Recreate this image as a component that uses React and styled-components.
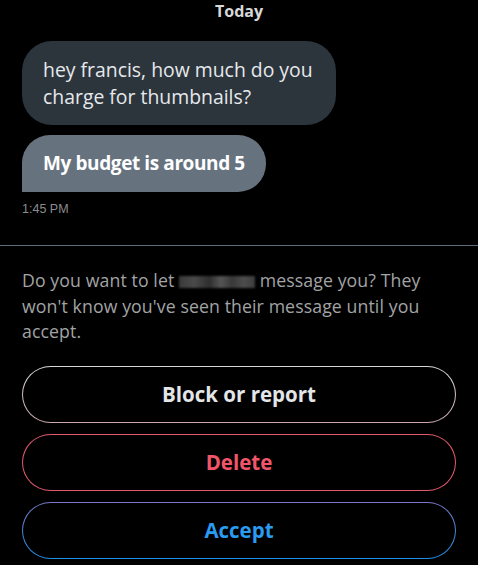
import React from 'react';
import styled, { createGlobalStyle } from 'styled-components';

const GlobalStyle = createGlobalStyle`
    html, body {
        margin: 0;
        padding: 0;
        background: #000;
    }

    body {
        font-family: "Open Sans", "Noto Sans", sans-serif;
        -webkit-font-smoothing: antialiased;
    }
`;

function App() {
    return (
        <>
            <GlobalStyle />
            <Screen>
                <Thread>
                    <DayLabel>Today</DayLabel>
                    <Bubble>hey francis, how much do you charge for thumbnails?</Bubble>
                    <Bubble last>My budget is around 5</Bubble>
                    <Time>1:45 PM</Time>
                </Thread>
                <Divider />
                <Request>
                    <Prompt>
                        Do you want to let <Blurred /> message you? They won't know you've seen their message until you accept.
                    </Prompt>
                    <Actions>
                        <ActionButton tone="neutral">Block or report</ActionButton>
                        <ActionButton tone="danger">Delete</ActionButton>
                        <ActionButton tone="accept">Accept</ActionButton>
                    </Actions>
                </Request>
            </Screen>
        </>
    );
}

export default App;

const tones = {
    neutral: { text: '#e3e6e8', border: 'linear-gradient(180deg, #d8d8d8, #c9a8ae)' },
    danger: { text: '#f1556a', border: 'linear-gradient(180deg, #e35a6c, #e35a6c)' },
    accept: { text: '#2a9bf0', border: 'linear-gradient(180deg, #7a78c8, #1d8fe6)' },
};

const Screen = styled.div`
    width: 478px;
    height: 565px;
    background: #000;
    overflow: hidden;
    display: flex;
    flex-direction: column;
`;

const Thread = styled.div`
    display: flex;
    flex-direction: column;
    align-items: flex-start;
    padding: 0 22px;
`;

const DayLabel = styled.div`
    align-self: center;
    color: #d8d8d8;
    font-size: 16px;
    font-weight: 700;
    line-height: 20px;
    margin-top: 1px;
    margin-bottom: 20px;
`;

const Bubble = styled.div`
    max-width: 272px;
    padding: 15px 21px;
    margin-bottom: 10px;
    border-radius: ${p => (p.last ? '28px 28px 28px 0' : '30px')};
    background: ${p => (p.last ? '#66737f' : '#2c343c')};
    color: ${p => (p.last ? '#ffffff' : '#e6e9ec')};
    font-size: ${p => (p.last ? '19px' : '19.4px')};
    font-weight: ${p => (p.last ? 700 : 400)};
    line-height: 27px;
    letter-spacing: ${p => (p.last ? '-0.4px' : '0')};
`;

const Time = styled.div`
    color: #8a8d90;
    font-family: "Liberation Sans", Arial, sans-serif;
    font-size: 12.5px;
    line-height: 16px;
    margin-top: -1px;
`;

const Divider = styled.div`
    height: 1px;
    background: #5f6c79;
    margin-top: 28px;
`;

const Request = styled.div`
    padding: 22px 22px 0;
`;

const Prompt = styled.p`
    margin: 0;
    color: #a2a4a6;
    font-size: 17.7px;
    line-height: 25.5px;
    letter-spacing: 0.1px;
`;

const Blurred = styled.span`
    display: inline-block;
    width: 76px;
    height: 12px;
    vertical-align: -1px;
    background: linear-gradient(90deg, #3a3a3a 0%, #4a4a4a 20%, #2e2e2e 40%, #555 55%, #383838 70%, #4d4d4d 85%, #3c3c3c 100%);
    filter: blur(1px);
`;

const Actions = styled.div`
    display: flex;
    flex-direction: column;
    gap: 11px;
    margin-top: 21px;
`;

const ActionButton = styled.button`
    height: 57px;
    border-radius: 999px;
    border: 1.5px solid transparent;
    background:
        linear-gradient(#000, #000) padding-box,
        ${p => tones[p.tone].border} border-box;
    color: ${p => tones[p.tone].text};
    font-family: "Open Sans", "Noto Sans", sans-serif;
    font-size: 20.5px;
    font-weight: 700;
    letter-spacing: 0;
    cursor: pointer;
`;
